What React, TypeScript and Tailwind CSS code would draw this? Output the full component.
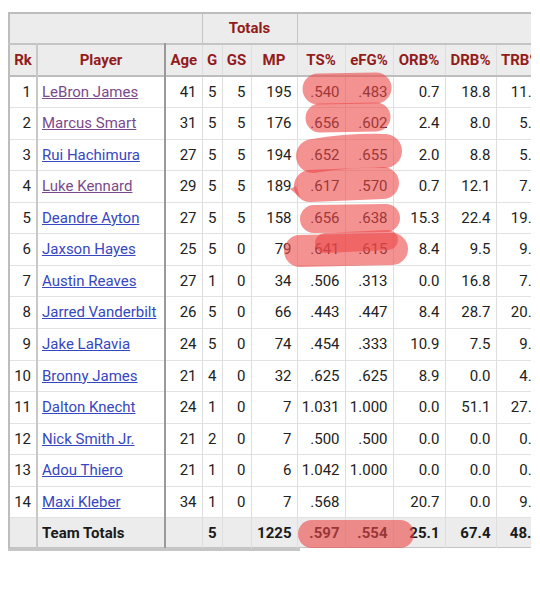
import React from "react";

type Row = {
  rk: number;
  name: string;
  visited?: boolean;
  age: string;
  g: string;
  gs: string;
  mp: string;
  ts: string;
  efg: string;
  orb: string;
  drb: string;
  trb: string;
};

const rows: Row[] = [
  { rk: 1, name: "LeBron James", visited: true, age: "41", g: "5", gs: "5", mp: "195", ts: ".540", efg: ".483", orb: "0.7", drb: "18.8", trb: "11.0" },
  { rk: 2, name: "Marcus Smart", visited: true, age: "31", g: "5", gs: "5", mp: "176", ts: ".656", efg: ".602", orb: "2.4", drb: "8.0", trb: "5.4" },
  { rk: 3, name: "Rui Hachimura", age: "27", g: "5", gs: "5", mp: "194", ts: ".652", efg: ".655", orb: "2.0", drb: "8.8", trb: "5.5" },
  { rk: 4, name: "Luke Kennard", visited: true, age: "29", g: "5", gs: "5", mp: "189", ts: ".617", efg: ".570", orb: "0.7", drb: "12.1", trb: "7.0" },
  { rk: 5, name: "Deandre Ayton", age: "27", g: "5", gs: "5", mp: "158", ts: ".656", efg: ".638", orb: "15.3", drb: "22.4", trb: "19.1" },
  { rk: 6, name: "Jaxson Hayes", age: "25", g: "5", gs: "0", mp: "79", ts: ".641", efg: ".615", orb: "8.4", drb: "9.5", trb: "9.0" },
  { rk: 7, name: "Austin Reaves", age: "27", g: "1", gs: "0", mp: "34", ts: ".506", efg: ".313", orb: "0.0", drb: "16.8", trb: "7.9" },
  { rk: 8, name: "Jarred Vanderbilt", age: "26", g: "5", gs: "0", mp: "66", ts: ".443", efg: ".447", orb: "8.4", drb: "28.7", trb: "20.0" },
  { rk: 9, name: "Jake LaRavia", age: "24", g: "5", gs: "0", mp: "74", ts: ".454", efg: ".333", orb: "10.9", drb: "7.5", trb: "9.0" },
  { rk: 10, name: "Bronny James", age: "21", g: "4", gs: "0", mp: "32", ts: ".625", efg: ".625", orb: "8.9", drb: "0.0", trb: "4.3" },
  { rk: 11, name: "Dalton Knecht", age: "24", g: "1", gs: "0", mp: "7", ts: "1.031", efg: "1.000", orb: "0.0", drb: "51.1", trb: "27.3" },
  { rk: 12, name: "Nick Smith Jr.", age: "21", g: "2", gs: "0", mp: "7", ts: ".500", efg: ".500", orb: "0.0", drb: "0.0", trb: "0.0" },
  { rk: 13, name: "Adou Thiero", age: "21", g: "1", gs: "0", mp: "6", ts: "1.042", efg: "1.000", orb: "0.0", drb: "0.0", trb: "0.0" },
  { rk: 14, name: "Maxi Kleber", age: "34", g: "1", gs: "0", mp: "7", ts: ".568", efg: "", orb: "20.7", drb: "0.0", trb: "9.9" },
];

const num = "text-right pr-[5px] pl-0 border-l border-[#dedede]";
const hd = "text-center font-bold text-[#941b1b] px-0 border-l border-[#dedede]";

export default function App() {
  return (
    <div className="relative w-[540px] h-[593px] bg-white font-['Roboto',sans-serif] text-[15px] text-[#222] overflow-hidden">
      <div className="pl-[8px] pt-[12px]">
        <div className="w-[523px] overflow-hidden">
          <table className="border-collapse table-fixed w-[536px] border-l-2 border-t-2 border-[#bdbdbd]">
            <colgroup>
              <col className="w-[28px]" />
              <col className="w-[128px]" />
              <col className="w-[37px]" />
              <col className="w-[20px]" />
              <col className="w-[29px]" />
              <col className="w-[46px]" />
              <col className="w-[48px]" />
              <col className="w-[48px]" />
              <col className="w-[52px]" />
              <col className="w-[51px]" />
              <col className="w-[49px]" />
            </colgroup>
            <thead>
              <tr className="h-[31px] bg-[#ececec] border-b-2 border-[#c4c4c4]">
                <th colSpan={3}></th>
                <th colSpan={3} className="text-center font-bold text-[#941b1b] border-l border-[#c4c4c4]">Totals</th>
                <th colSpan={5} className="border-l border-[#c4c4c4]"></th>
              </tr>
              <tr className="h-[32px] bg-[#ececec] border-b-2 border-[#bdbdbd]">
                <th className="text-center font-bold text-[#941b1b] border-r-2 border-[#c8c8c8]">Rk</th>
                <th className="text-center font-bold text-[#941b1b] border-r-2 border-[#9a9a9a]">Player</th>
                <th className={hd}>Age</th>
                <th className={hd}>G</th>
                <th className={hd}>GS</th>
                <th className={hd}>MP</th>
                <th className={hd}>TS%</th>
                <th className={hd}>eFG%</th>
                <th className={hd}>ORB%</th>
                <th className={hd}>DRB%</th>
                <th className={hd + " whitespace-nowrap"}>TRB%</th>
              </tr>
            </thead>
            <tbody>
              {rows.map((r) => (
                <tr key={r.rk} className="h-[31.57px] border-b border-[#e2e2e2]">
                  <td className="text-right pr-[5px] border-r-2 border-[#c8c8c8]">{r.rk}</td>
                  <td className="pl-[4px] border-r-2 border-[#9a9a9a] whitespace-nowrap">
                    <a
                      href="#"
                      className={
                        r.visited
                          ? "underline text-[#7b4a8b] decoration-[#7b4a8b]"
                          : "underline text-[#3747c0] decoration-[#3747c0]"
                      }
                    >
                      {r.name}
                    </a>
                  </td>
                  <td className={num}>{r.age}</td>
                  <td className={num}>{r.g}</td>
                  <td className={num}>{r.gs}</td>
                  <td className={num}>{r.mp}</td>
                  <td className={num}>{r.ts}</td>
                  <td className={num}>{r.efg}</td>
                  <td className={num}>{r.orb}</td>
                  <td className={num}>{r.drb}</td>
                  <td className={num + " whitespace-nowrap"}>{r.trb}</td>
                </tr>
              ))}
              <tr className="h-[30px] bg-[#ececec] font-bold text-[#1a1a1a] border-t border-b border-[#c4c4c4]">
                <td className="border-r-2 border-[#c8c8c8]"></td>
                <td className="pl-[4px] border-r-2 border-[#9a9a9a] whitespace-nowrap">Team Totals</td>
                <td className={num}></td>
                <td className={num}>5</td>
                <td className={num}></td>
                <td className={num}>1225</td>
                <td className={num}>.597</td>
                <td className={num}>.554</td>
                <td className={num}>25.1</td>
                <td className={num}>67.4</td>
                <td className={num + " whitespace-nowrap"}>48.2</td>
              </tr>
            </tbody>
          </table>
          <div className="h-[3px] w-[292px] bg-[#c6c6c6]"></div>
        </div>
      </div>

      {/* marker highlights */}
      <svg className="pointer-events-none absolute inset-0" width="540" height="593" viewBox="0 0 540 593">
        <g stroke="rgba(237,72,72,0.6)" strokeLinecap="round" fill="none">
          <path d="M318 89 L376 88" strokeWidth="31" />
          <path d="M320 118 L376 117" strokeWidth="29" />
          <path d="M313 156 Q350 150 385 151" strokeWidth="34" />
          <path d="M310 186 L383 183" strokeWidth="32" />
          <path d="M314 219 L386 218" strokeWidth="28" />
          <path d="M300 251 L392 249" strokeWidth="32" />
          <path d="M325 243 L388 240" strokeWidth="20" />
          <path d="M312 534 L400 534" strokeWidth="28" />
        </g>
        <path d="M296 186 L290 189 L300 197 Z" fill="rgba(237,72,72,0.6)" />
      </svg>
    </div>
  );
}
